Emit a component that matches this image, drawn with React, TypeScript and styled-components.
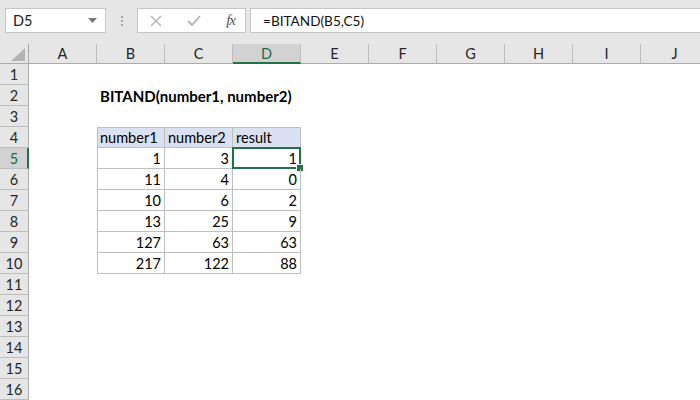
import React from 'react';
import styled, { createGlobalStyle, css } from 'styled-components';

const GlobalStyle = createGlobalStyle`
  html, body {
    margin: 0;
    padding: 0;
    background: #ffffff;
  }
  body {
    font-family: Lato, "Liberation Sans", sans-serif;
    color: #000;
  }
`;

const Frame = styled.div`
  width: 700px;
  height: 400px;
  overflow: hidden;
  background: #fff;
`;

const FormulaBar = styled.div`
  box-sizing: border-box;
  height: 44px;
  padding: 8px 0 0 5px;
  display: flex;
  align-items: flex-start;
  background: #e6e6e6;
`;

const Field = styled.div`
  box-sizing: border-box;
  height: 25px;
  background: #fff;
  border: 1px solid #c6c6c6;
  display: flex;
  align-items: center;
  font-size: 14.5px;
  color: #222;
`;

const NameBox = styled(Field)`
  width: 101px;
  padding: 0 8px 0 7px;
  justify-content: space-between;
`;

const Grip = styled.div`
  width: 31px;
  height: 25px;
  display: flex;
  flex-direction: column;
  align-items: center;
  justify-content: center;
  gap: 2px;
  span {
    width: 2px;
    height: 2px;
    background: #a6a6a6;
  }
`;

const Buttons = styled(Field)`
  width: 109px;
  padding: 0 10px 0 12px;
  justify-content: space-between;
`;

const Fx = styled.span`
  font-family: "Liberation Serif", serif;
  font-style: italic;
  font-size: 15px;
  color: #555;
  letter-spacing: -1px;
`;

const Formula = styled(Field)`
  flex: 1;
  margin-left: 4px;
  padding-left: 12px;
  border-right: none;
  font-size: 13.6px;
  color: #111;
`;

const Sheet = styled.div`
  display: grid;
  grid-template-columns: 29px repeat(10, 68px);
  grid-template-rows: 20px repeat(16, 21px);
  font-size: 14.5px;
`;

const Corner = styled.div`
  box-sizing: border-box;
  background: #e6e6e6;
  border-right: 1px solid #ababab;
  border-bottom: 1px solid #ababab;
  display: flex;
  align-items: flex-end;
  justify-content: flex-end;
  padding: 0 3px 2px 0;
`;

const ColHead = styled.div<{ $active?: boolean }>`
  box-sizing: border-box;
  background: ${p => (p.$active ? '#d2d2d2' : '#e6e6e6')};
  border-right: 1px solid #bdbdbd;
  border-bottom: ${p => (p.$active ? '2px solid #217346' : '1px solid #ababab')};
  display: flex;
  align-items: center;
  justify-content: center;
  color: ${p => (p.$active ? '#1f6b43' : '#262626')};
  padding-top: ${p => (p.$active ? '1px' : '0')};
`;

const RowHead = styled.div<{ $active?: boolean }>`
  box-sizing: border-box;
  background: ${p => (p.$active ? '#d2d2d2' : '#e6e6e6')};
  border-bottom: 1px solid #bdbdbd;
  border-right: ${p => (p.$active ? '2px solid #217346' : '1px solid #ababab')};
  display: flex;
  align-items: center;
  justify-content: center;
  color: ${p => (p.$active ? '#1f6b43' : '#262626')};
  padding-left: ${p => (p.$active ? '1px' : '0')};
`;

const Cell = styled.div<{
  $table?: boolean;
  $head?: boolean;
  $first?: boolean;
  $num?: boolean;
  $title?: boolean;
  $selected?: boolean;
}>`
  box-sizing: border-box;
  position: relative;
  display: flex;
  align-items: flex-end;
  padding: 0 3px 1px;
  white-space: nowrap;
  justify-content: ${p => (p.$num ? 'flex-end' : 'flex-start')};
  ${p =>
    p.$title &&
    css`
      font-weight: 700;
      font-size: 15px;
      overflow: visible;
      z-index: 1;
    `}
  ${p =>
    p.$table &&
    css`
      border-right: 1px solid #bfbfbf;
      border-bottom: 1px solid #bfbfbf;
    `}
  ${p =>
    p.$first &&
    css`
      border-left: 1px solid #bfbfbf;
      padding-left: 2px;
    `}
  ${p =>
    p.$head &&
    css`
      background: #d9e1f2;
      border-top: 1px solid #bfbfbf;
    `}
  ${p =>
    p.$selected &&
    css`
      &::before {
        content: '';
        position: absolute;
        top: -1px;
        left: -1px;
        right: -1px;
        bottom: -1px;
        border: 2px solid #217346;
      }
      &::after {
        content: '';
        position: absolute;
        right: -4px;
        bottom: -4px;
        width: 6px;
        height: 6px;
        background: #217346;
        border: 1px solid #fff;
      }
    `}
`;

const columns = ['A', 'B', 'C', 'D', 'E', 'F', 'G', 'H', 'I', 'J'];

const data: [number, number, number][] = [
  [1, 3, 1],
  [11, 4, 0],
  [10, 6, 2],
  [13, 25, 9],
  [127, 63, 63],
  [217, 122, 88],
];

const ArrowDown = () => (
  <svg width="9" height="5" viewBox="0 0 9 5">
    <path d="M0 0h9L4.5 5z" fill="#777" />
  </svg>
);

const CancelIcon = () => (
  <svg width="12" height="12" viewBox="0 0 12 12">
    <path d="M1 1l10 10M11 1L1 11" stroke="#b3b3b3" strokeWidth="1.4" />
  </svg>
);

const EnterIcon = () => (
  <svg width="14" height="11" viewBox="0 0 14 11">
    <path d="M1 6l4 4 8-9" stroke="#b3b3b3" strokeWidth="1.8" fill="none" />
  </svg>
);

const SelectAll = () => (
  <svg width="14" height="13" viewBox="0 0 14 13">
    <path d="M14 0v13H0z" fill="#b4b4b4" />
  </svg>
);

function renderCell(row: number, col: number) {
  const key = `${row}-${col}`;
  if (row === 2 && col === 1) {
    return (
      <Cell key={key} $title>
        BITAND(number1, number2)
      </Cell>
    );
  }
  const inTable = row >= 4 && row <= 10 && col >= 1 && col <= 3;
  if (!inTable) return <Cell key={key} />;
  if (row === 4) {
    const label = ['number1', 'number2', 'result'][col - 1];
    return (
      <Cell key={key} $table $head $first={col === 1}>
        {label}
      </Cell>
    );
  }
  const value = data[row - 5][col - 1];
  return (
    <Cell key={key} $table $num $first={col === 1} $selected={row === 5 && col === 3}>
      {value}
    </Cell>
  );
}

const App = () => {
  const rows = Array.from({ length: 16 }, (_, i) => i + 1);
  return (
    <Frame>
      <GlobalStyle />
      <FormulaBar>
        <NameBox>
          <span>D5</span>
          <ArrowDown />
        </NameBox>
        <Grip>
          <span />
          <span />
          <span />
        </Grip>
        <Buttons>
          <CancelIcon />
          <EnterIcon />
          <Fx>fx</Fx>
        </Buttons>
        <Formula>=BITAND(B5,C5)</Formula>
      </FormulaBar>
      <Sheet>
        <Corner>
          <SelectAll />
        </Corner>
        {columns.map(c => (
          <ColHead key={c} $active={c === 'D'}>
            {c}
          </ColHead>
        ))}
        {rows.map(r => (
          <React.Fragment key={r}>
            <RowHead $active={r === 5}>{r}</RowHead>
            {columns.map((_, ci) => renderCell(r, ci))}
          </React.Fragment>
        ))}
      </Sheet>
    </Frame>
  );
};

export default App;
